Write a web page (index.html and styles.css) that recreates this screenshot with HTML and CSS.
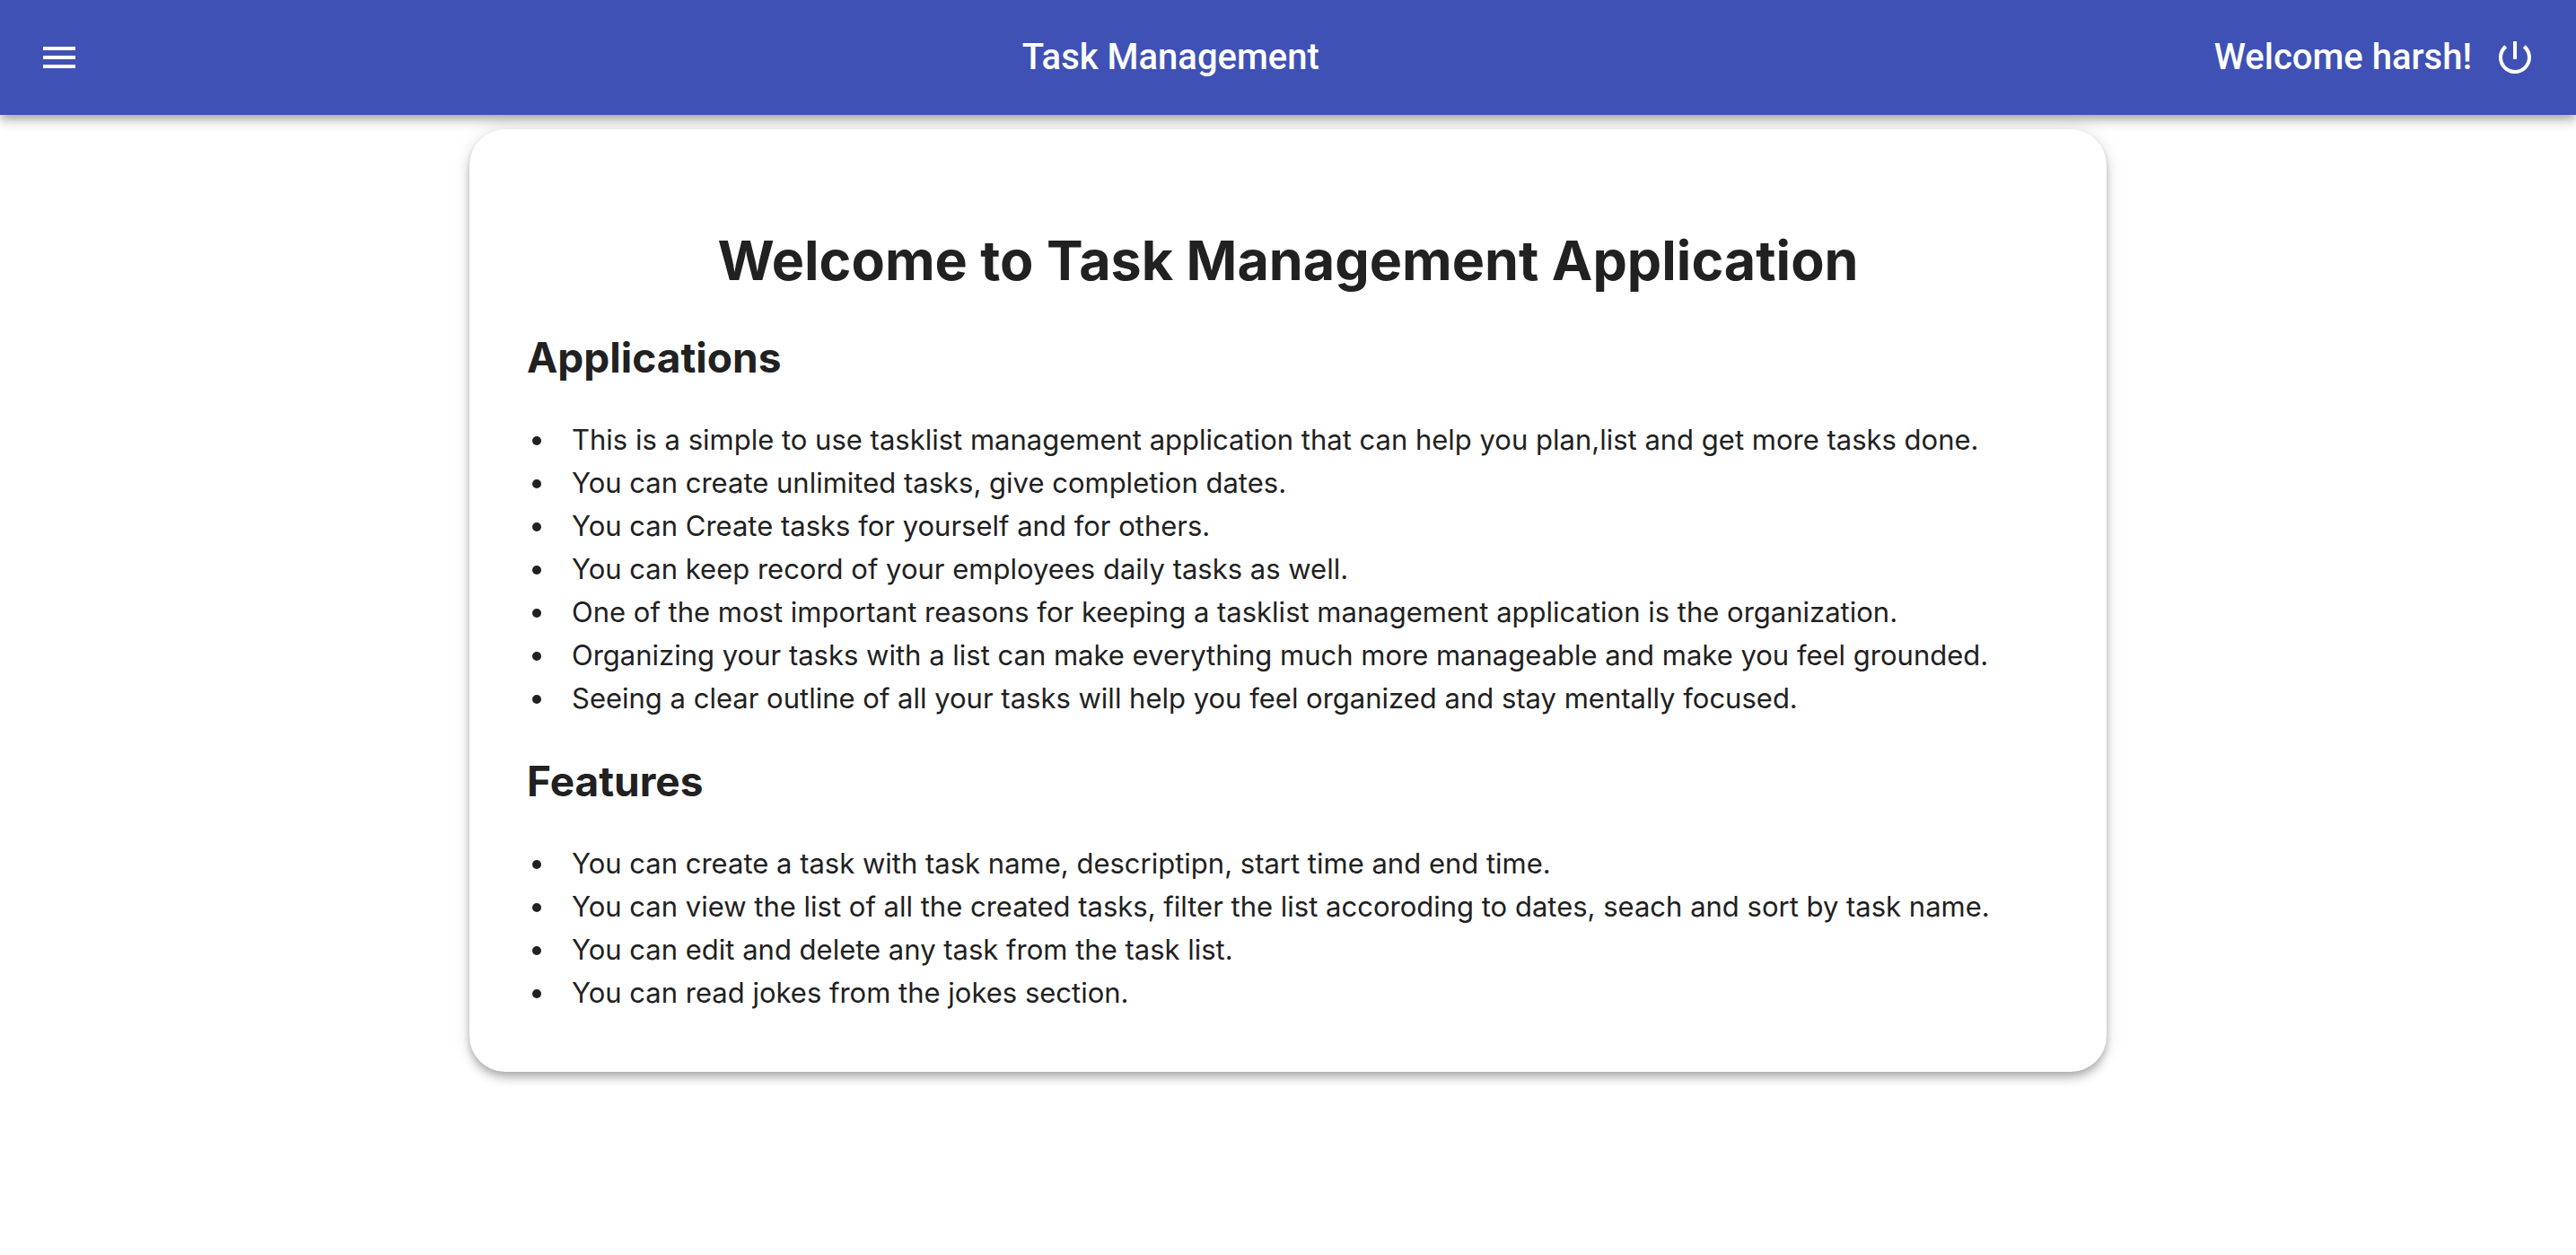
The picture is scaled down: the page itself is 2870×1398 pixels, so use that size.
FILE: index.html
```html
<!DOCTYPE html>
<html lang="en">
<head>
<meta charset="utf-8">
<title>Task Management</title>
<link rel="stylesheet" href="styles.css">
</head>
<body>
<header class="bar">
  <button class="icon-button menu-button" type="button" aria-label="Menu">
    <svg class="icon" viewBox="0 0 24 24"><path d="M3 18h18v-2H3v2zm0-5h18v-2H3v2zm0-7v2h18V6H3z"/></svg>
  </button>
  <span class="bar-title">Task Management</span>
  <div class="account">
    <span>Welcome harsh!</span>
    <button class="icon-button" type="button" aria-label="Log out">
      <svg class="icon" viewBox="0 0 24 24"><path d="M13 3h-2v10h2V3zm4.830 2.170l-1.420 1.420C17.990 7.860 19 9.810 19 12c0 3.870-3.130 7-7 7s-7-3.130-7-7c0-2.190 1.010-4.140 2.580-5.420L6.170 5.170C4.230 6.820 3 9.260 3 12c0 4.970 4.030 9 9 9s9-4.030 9-9c0-2.740-1.230-5.180-3.170-6.830z"/></svg>
    </button>
  </div>
</header>
<main class="card">
  <h1 class="card-title">Welcome to Task Management Application</h1>
  <h2 class="section-title">Applications</h2>
  <ul class="points">
    <li>This is a simple to use tasklist management application that can help you plan,list and get more tasks done.</li>
    <li>You can create unlimited tasks, give completion dates.</li>
    <li>You can Create tasks for yourself and for others.</li>
    <li>You can keep record of your employees daily tasks as well.</li>
    <li>One of the most important reasons for keeping a tasklist management application is the organization.</li>
    <li>Organizing your tasks with a list can make everything much more manageable and make you feel grounded.</li>
    <li>Seeing a clear outline of all your tasks will help you feel organized and stay mentally focused.</li>
  </ul>
  <h2 class="section-title">Features</h2>
  <ul class="points">
    <li>You can create a task with task name, descriptipn, start time and end time.</li>
    <li>You can view the list of all the created tasks, filter the list accoroding to dates, seach and sort by task name.</li>
    <li>You can edit and delete any task from the task list.</li>
    <li>You can read jokes from the jokes section.</li>
  </ul>
</main>
</body>
</html>
```
FILE: styles.css
```css
* {
  box-sizing: border-box;
}

body {
  margin: 0;
  background: #fff;
  color: #212121;
  font-family: Inter, sans-serif;
  font-size: 31px;
  line-height: 48px;
}

.bar,
.card {
  box-shadow: 0 4px 8px -2px rgba(0, 0, 0, 0.2), 0 8px 10px rgba(0, 0, 0, 0.14), 0 2px 20px rgba(0, 0, 0, 0.12);
}

.bar {
  display: flex;
  align-items: center;
  justify-content: space-between;
  min-height: 128px;
  padding: 0 20px;
  background: #3f51b5;
  color: #fff;
  font-family: Roboto, sans-serif;
  font-size: 40px;
  font-weight: 500;
}

.account {
  display: flex;
  align-items: center;
}

.icon-button {
  display: flex;
  padding: 24px;
  border: 0;
  background: none;
  color: inherit;
}

.menu-button {
  padding-left: 22px;
  margin-right: 28px;
}

.icon {
  width: 48px;
  height: 48px;
  fill: currentColor;
}

.card {
  width: 1824px;
  max-width: 100%;
  margin: 16px auto;
  padding: 110px 64px 64px;
  border-radius: 40px;
  background: #fff;
}

.card-title {
  margin: 0 0 44px;
  font-size: 61px;
  line-height: 72px;
  text-align: center;
}

.section-title {
  margin: 0 0 40px;
  font-size: 46px;
  line-height: 56px;
}

.points {
  margin: 0 0 40px;
  padding: 0 0 0 6px;
  list-style: none;
}

.points:last-child {
  margin-bottom: 0;
}

.points li {
  display: flex;
  gap: 34px;
}

.points li::before {
  content: "";
  flex: none;
  width: 10px;
  height: 10px;
  margin-top: 20px;
  border-radius: 50%;
  background: currentColor;
}
```
